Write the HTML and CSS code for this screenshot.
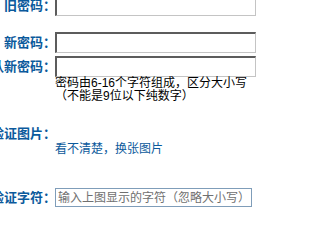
FILE: index.html
```html
<!DOCTYPE html>
<html lang="zh-CN">
<head>
<meta charset="utf-8">
<title>修改密码</title>
<link rel="stylesheet" href="styles.css">
</head>
<body>
<form class="form">
  <div class="row row-old">
    <label class="label">旧密码：</label>
    <div class="field"><input class="pwd" type="password"></div>
  </div>
  <div class="row row-new">
    <label class="label">新密码：</label>
    <div class="field"><input class="pwd" type="password"></div>
  </div>
  <div class="row row-confirm">
    <label class="label label-top">确认新密码：</label>
    <div class="field">
      <input class="pwd" type="password">
      <p class="hint">密码由6-16个字符组成，区分大小写<br>（不能是9位以下纯数字）</p>
    </div>
  </div>
  <div class="row row-img">
    <label class="label label-img">验证图片：</label>
    <div class="field field-img">
      <a class="link" href="#">看不清楚，换张图片</a>
    </div>
  </div>
  <div class="row row-code">
    <label class="label">验证字符：</label>
    <div class="field"><input class="code" type="text" placeholder="输入上图显示的字符（忽略大小写）"></div>
  </div>
</form>
</body>
</html>
```

FILE: styles.css
```css
html, body {
  margin: 0;
  padding: 0;
  background: #fff;
  overflow: hidden;
}
body {
  font-family: "Liberation Sans", "Noto Sans CJK SC", sans-serif;
  font-size: 12px;
  line-height: 12px;
  color: #000;
}
.form {
  display: flex;
  flex-direction: column;
  margin: -5px 0 0 -47px;
}
.row {
  display: flex;
  align-items: center;
}
.label {
  width: 103px;
  flex: none;
  text-align: right;
  font-size: 13px;
  font-weight: bold;
  color: #0b5a9c;
  line-height: 12px;
}
.field {
  margin-left: -1px;
  display: flex;
  flex-direction: column;
}
.pwd {
  box-sizing: border-box;
  width: 201px;
  height: 21px;
  margin: 0;
  padding: 0 2px;
  border-style: solid;
  border-width: 2px 1px 1px 2px;
  border-color: #5c5c5c #c4c4c4 #c4c4c4 #5c5c5c;
  background: #fff;
  font: 12px "Liberation Sans", "Noto Sans CJK SC", sans-serif;
  outline: none;
}
.row-new {
  margin-top: 16px;
}
.row-confirm {
  margin-top: 3px;
  align-items: flex-start;
}
.label-top {
  margin-top: 5px;
}
.hint {
  margin: 0;
  line-height: 13px;
}
.row-img {
  align-items: flex-start;
}
.label-img {
  margin-top: 25px;
}
.field-img {
  padding-top: 40px;
}
.link {
  color: #0b5a9c;
  text-decoration: none;
  line-height: 12px;
}
.row-code {
  margin-top: 33px;
}
.code {
  box-sizing: border-box;
  width: 197px;
  height: 19px;
  margin: 0;
  padding: 0 2px;
  border: 1px solid #7f9db9;
  background: #fff;
  font: 12px "Liberation Sans", "Noto Sans CJK SC", sans-serif;
  outline: none;
}
.code::placeholder {
  color: #707070;
}
```
